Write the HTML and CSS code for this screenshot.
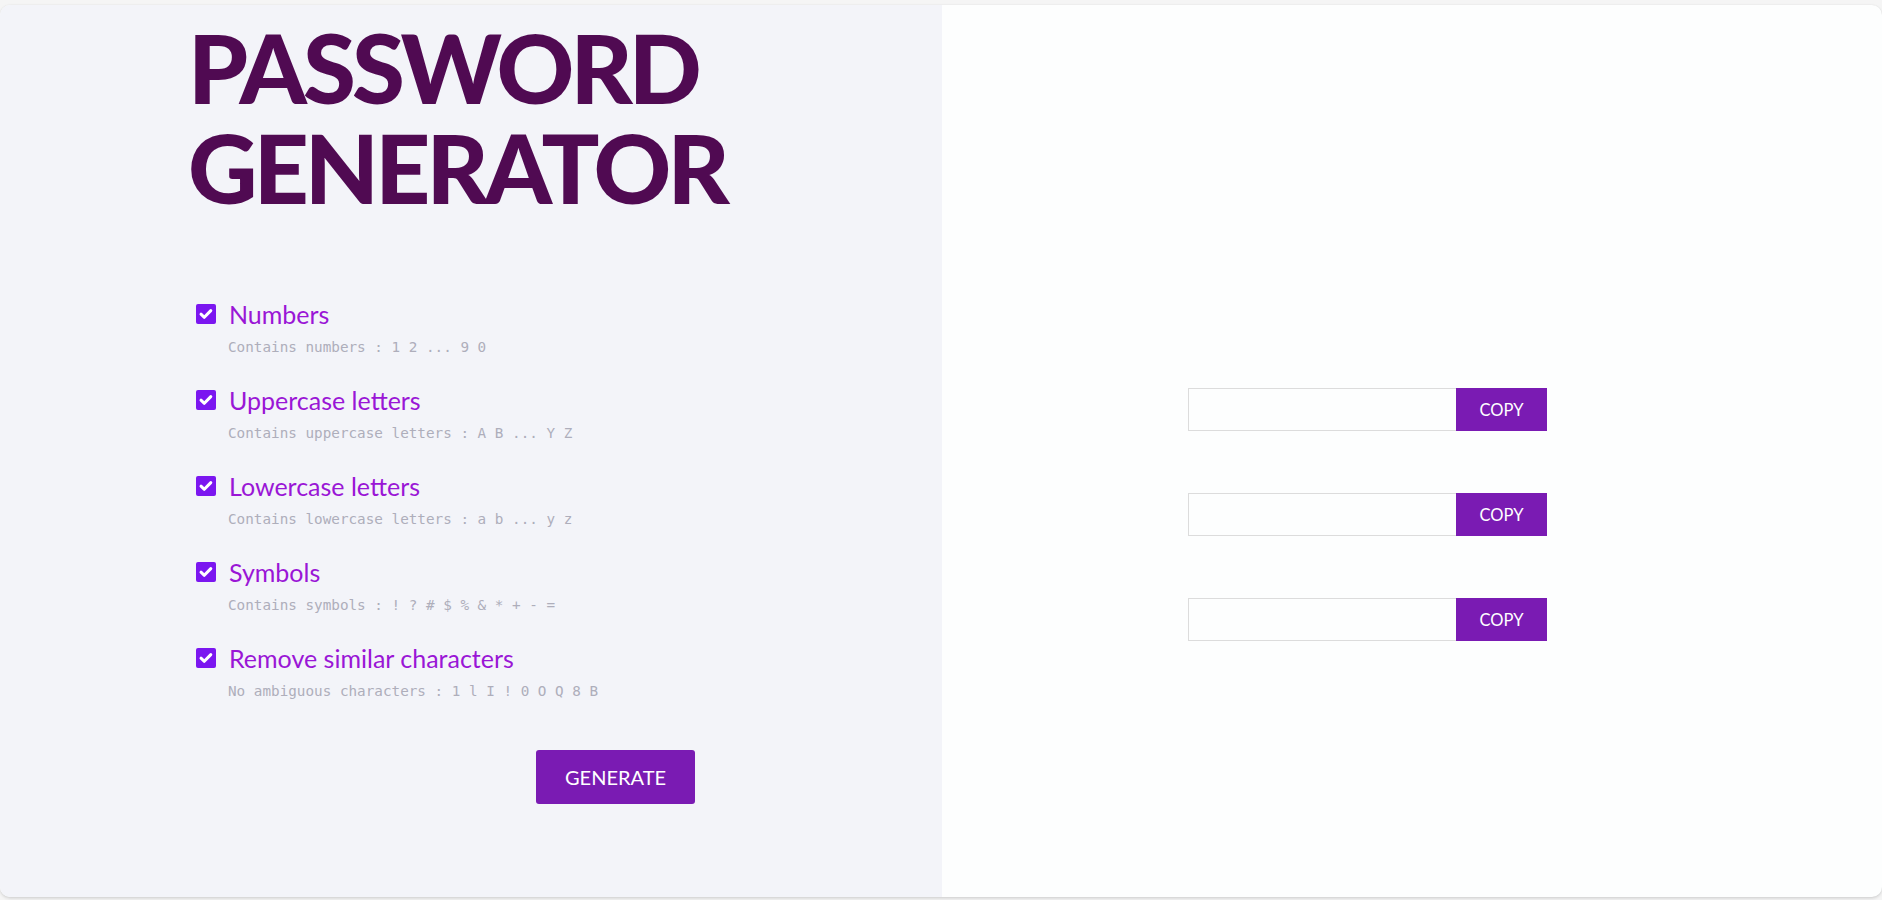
FILE: index.html
```html
<!DOCTYPE html>
<html lang="en">
<head>
<meta charset="utf-8">
<title>Password Generator</title>
<link rel="stylesheet" href="styles.css">
</head>
<body>
<div class="card">
  <section class="left">
    <h1 class="title">PASSWORD<br>GENERATOR</h1>
    <div class="options">
      <div class="option">
        <label class="opt-label"><span class="box"><svg viewBox="0 0 20 20" width="20" height="20"><path d="M5 10.2 L8.3 13.3 L14.8 6.6" fill="none" stroke="#fff" stroke-width="3" stroke-linecap="round" stroke-linejoin="round"/></svg></span><span class="opt-name">Numbers</span></label>
        <p class="opt-desc">Contains numbers : 1 2 ... 9 0</p>
      </div>
      <div class="option">
        <label class="opt-label"><span class="box"><svg viewBox="0 0 20 20" width="20" height="20"><path d="M5 10.2 L8.3 13.3 L14.8 6.6" fill="none" stroke="#fff" stroke-width="3" stroke-linecap="round" stroke-linejoin="round"/></svg></span><span class="opt-name">Uppercase letters</span></label>
        <p class="opt-desc">Contains uppercase letters : A B ... Y Z</p>
      </div>
      <div class="option">
        <label class="opt-label"><span class="box"><svg viewBox="0 0 20 20" width="20" height="20"><path d="M5 10.2 L8.3 13.3 L14.8 6.6" fill="none" stroke="#fff" stroke-width="3" stroke-linecap="round" stroke-linejoin="round"/></svg></span><span class="opt-name">Lowercase letters</span></label>
        <p class="opt-desc">Contains lowercase letters : a b ... y z</p>
      </div>
      <div class="option">
        <label class="opt-label"><span class="box"><svg viewBox="0 0 20 20" width="20" height="20"><path d="M5 10.2 L8.3 13.3 L14.8 6.6" fill="none" stroke="#fff" stroke-width="3" stroke-linecap="round" stroke-linejoin="round"/></svg></span><span class="opt-name">Symbols</span></label>
        <p class="opt-desc">Contains symbols : ! ? # $ % &amp; * + - =</p>
      </div>
      <div class="option">
        <label class="opt-label"><span class="box"><svg viewBox="0 0 20 20" width="20" height="20"><path d="M5 10.2 L8.3 13.3 L14.8 6.6" fill="none" stroke="#fff" stroke-width="3" stroke-linecap="round" stroke-linejoin="round"/></svg></span><span class="opt-name">Remove similar characters</span></label>
        <p class="opt-desc">No ambiguous characters : 1 l I ! 0 O Q 8 B</p>
      </div>
    </div>
    <button class="generate">GENERATE</button>
  </section>
  <section class="right">
    <div class="result"><input class="result-input" type="text"><button class="copy">COPY</button></div>
    <div class="result"><input class="result-input" type="text"><button class="copy">COPY</button></div>
    <div class="result"><input class="result-input" type="text"><button class="copy">COPY</button></div>
  </section>
</div>
</body>
</html>
```

FILE: styles.css
```css
* { box-sizing: border-box; }

html, body {
  margin: 0;
  padding: 0;
  height: 900px;
  overflow: hidden;
}

body {
  background: #f5f5f5;
  font-family: "Lato", "Liberation Sans", sans-serif;
  padding-top: 5px;
}

.card {
  display: flex;
  height: 892px;
  border-radius: 10px;
  overflow: hidden;
  box-shadow: 0 0 2px rgba(0, 0, 0, 0.10), 0 2px 3px rgba(0, 0, 0, 0.10);
  background: #fdfefe;
}

.left {
  width: 942px;
  background: #f3f4f9;
  padding: 12px 0 0 188px;
  display: flex;
  flex-direction: column;
  align-items: flex-start;
}

.title {
  margin: 0;
  font-family: "Lato", sans-serif;
  font-weight: 900;
  font-size: 96px;
  line-height: 100px;
  color: #500a52;
  letter-spacing: -3.9px;
}

.options {
  margin-top: 82px;
  display: flex;
  flex-direction: column;
  gap: 28px;
  padding-left: 8px;
}

.option {
  display: flex;
  flex-direction: column;
}

.opt-label {
  display: flex;
  align-items: center;
  gap: 13px;
  height: 30px;
}

.box {
  width: 20px;
  height: 20px;
  background: #7b16f0;
  border-radius: 2px;
  display: flex;
}

.opt-name {
  font-size: 25px;
  line-height: 30px;
  color: #9a16d6;
}

.opt-desc {
  margin: 8px 0 0 32px;
  font-family: "DejaVu Sans Mono", "Liberation Mono", monospace;
  font-size: 14.3px;
  line-height: 20px;
  color: #aeaebb;
}

.generate {
  margin: 49px 0 0 348px;
  width: 159px;
  height: 54px;
  border: 0;
  border-radius: 3px;
  background: #7a1bb3;
  color: #ffffff;
  font-family: "Lato", sans-serif;
  font-size: 20px;
  padding: 0;
}

.right {
  flex: 1;
  padding: 383px 0 0 246px;
  display: flex;
  flex-direction: column;
  gap: 62px;
}

.result {
  display: flex;
  height: 43px;
}

.result-input {
  width: 268px;
  height: 43px;
  border: 1px solid #dcdcdc;
  border-right: 0;
  background: #fdfefe;
  margin: 0;
  outline: none;
}

.copy {
  width: 91px;
  height: 43px;
  border: 0;
  background: #7a1bb3;
  color: #ffffff;
  font-family: "Lato", sans-serif;
  font-size: 16.5px;
  padding: 0;
  margin: 0;
}
```
